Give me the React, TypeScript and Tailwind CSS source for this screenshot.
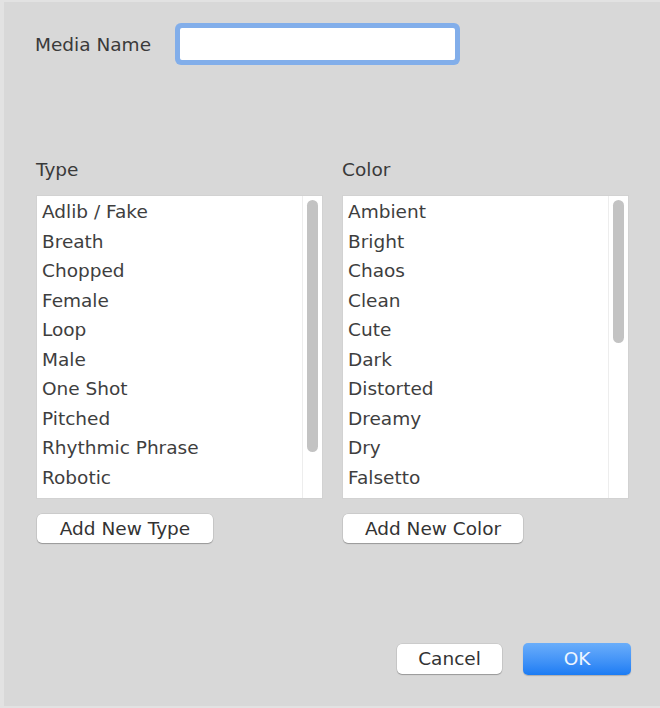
import { useState } from 'react'

const TYPES = [
  'Adlib / Fake', 'Breath', 'Chopped', 'Female', 'Loop', 'Male',
  'One Shot', 'Pitched', 'Rhythmic Phrase', 'Robotic', 'SFX',
]

const COLORS = [
  'Ambient', 'Bright', 'Chaos', 'Clean', 'Cute', 'Dark', 'Distorted',
  'Dreamy', 'Dry', 'Falsetto', 'Growl',
]

function ListBox({ items, thumbH }: { items: string[]; thumbH: string }) {
  return (
    <div className="flex h-[304px] w-[287px] overflow-hidden border border-[#d2d2d2] bg-white">
      <ul className="flex-1 overflow-hidden pl-[5px] pt-[1px]">
        {items.map((it) => (
          <li key={it} className="h-[29.5px] leading-[29.5px] whitespace-nowrap text-[#3e3e3e]">
            {it}
          </li>
        ))}
      </ul>
      <div className="w-[20px] border-l border-[#ededed] bg-white pl-[4px] pt-[4px]">
        <div className={`w-[11px] rounded-full bg-[#c3c3c3] ${thumbH}`} />
      </div>
    </div>
  )
}

function PushButton({ label, className }: { label: string; className: string }) {
  return (
    <button
      className={`rounded-[5px] bg-white text-[#333] shadow-[0_1px_1px_rgba(0,0,0,0.25),0_0_0_0.5px_rgba(0,0,0,0.12)] ${className}`}
    >
      {label}
    </button>
  )
}

export default function App() {
  const [name, setName] = useState('')

  return (
    <div className="h-[708px] w-[660px] overflow-hidden border-t-2 border-b-2 border-l-4 border-[#e2e2e2] bg-[#d8d8d8] font-['DejaVu_Sans',sans-serif] text-[18.5px] text-[#3a3a3a]">
      <div className="mt-[25px] flex items-center pl-[31px]">
        <span className="mt-[2px] w-[145px] leading-[32px]">Media Name</span>
        <input
          value={name}
          onChange={(e) => setName(e.target.value)}
          className="h-[32px] w-[275px] rounded-[2px] bg-white px-1 outline-none ring-[5px] ring-[#82aeea]"
        />
      </div>

      <div className="mt-[97px] flex gap-[19px] pl-[32px]">
        <div className="flex flex-col">
          <span className="h-[24px] leading-[24px]">Type</span>
          <div className="mt-[13px]">
            <ListBox items={TYPES} thumbH="h-[252px]" />
          </div>
          <PushButton label="Add New Type" className="ml-[1px] mt-[15px] h-[29px] w-[176px]" />
        </div>
        <div className="flex flex-col">
          <span className="h-[24px] leading-[24px]">Color</span>
          <div className="mt-[13px]">
            <ListBox items={COLORS} thumbH="h-[143px]" />
          </div>
          <PushButton label="Add New Color" className="ml-[1px] mt-[15px] h-[29px] w-[180px]" />
        </div>
      </div>

      <div className="mt-[100px] flex items-center justify-end gap-[21px] pr-[29px]">
        <PushButton label="Cancel" className="h-[30px] w-[105px]" />
        <button className="h-[32px] w-[108px] rounded-[5px] bg-gradient-to-b from-[#6aaefa] to-[#1a7cf4] text-[#eef5ff] shadow-[0_1px_1px_rgba(0,0,0,0.2)]">
          OK
        </button>
      </div>
    </div>
  )
}
